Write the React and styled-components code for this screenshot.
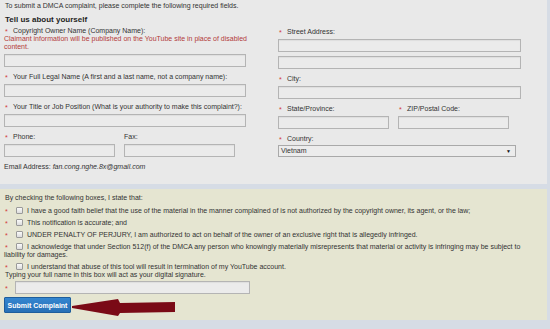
import React from 'react';
import styled, { createGlobalStyle } from 'styled-components';

const GlobalStyle = createGlobalStyle`
    body {
        margin: 0;
        background: #d6dce5;
        font-family: "Liberation Sans", Arial, sans-serif;
        font-size: 7px;
        color: #333;
    }
`;

const Page = styled.div`
    width: 550px;
    height: 329px;
    overflow: hidden;
`;

const TopPanel = styled.section`
    width: 547px;
    height: 184px;
    box-sizing: border-box;
    background: #e9e9e9;
    padding: 2px 0 0 4px;
`;

const Intro = styled.div`
    line-height: 8px;
    height: 8px;
    margin-left: 1px;
`;

const Title = styled.h3`
    margin: 5px 0 0 1px;
    font-size: 8px;
    line-height: 10px;
    font-weight: bold;
    color: #1e1e1e;
`;

const Columns = styled.div`
    display: grid;
    grid-template-columns: 274px 1fr;
    margin-top: 1px;
`;

const Column = styled.div`
    display: flex;
    flex-direction: column;
    padding-top: ${p => p.$offset || 0}px;
`;

const Field = styled.div`
    margin-top: ${p => p.$gap ?? 6}px;
`;

const Label = styled.div`
    line-height: 8px;
    white-space: nowrap;
`;

const Req = styled.span`
    display: inline-block;
    width: ${p => p.$w || 9}px;
    height: 8px;
    overflow: hidden;
    vertical-align: top;
    color: #d23a3a;
    font-size: 7px;
    line-height: 9px;
    padding-left: 1px;
    box-sizing: border-box;
`;

const Note = styled.div`
    color: #b33a3a;
    line-height: 8px;
    width: 250px;
`;

const Input = styled.div`
    width: ${p => p.$w}px;
    height: 13px;
    margin-top: ${p => p.$mt ?? 3}px;
    box-sizing: border-box;
    border: 1px solid #b4b4b4;
    background: #ebebeb;
    box-shadow: inset 0 1px 1px rgba(0, 0, 0, 0.06);
`;

const Pair = styled.div`
    display: flex;
    gap: ${p => p.$gap}px;
`;

const Select = styled.div`
    width: 238px;
    height: 12px;
    margin-top: 2px;
    box-sizing: border-box;
    border: 1px solid #a9a9a9;
    background: #ececec;
    display: flex;
    align-items: center;
    justify-content: space-between;
    padding: 0 4px 0 2px;
    line-height: 8px;
    color: #333;
`;

const Caret = styled.span`
    font-size: 5px;
    color: #111;
`;

const Email = styled.div`
    margin-top: 6px;
    line-height: 8px;
    em {
        font-style: italic;
    }
`;

const BottomPanel = styled.section`
    position: relative;
    width: 547px;
    height: 131px;
    margin-top: 5px;
    box-sizing: border-box;
    background: #e5e5d1;
    padding: 5px 8px 0 4px;
`;

const Statement = styled.div`
    line-height: 8px;
    margin-left: 1px;
`;

const Check = styled.div`
    line-height: 8px;
    margin-top: ${p => p.$mt ?? 4}px;
`;

const Box = styled.span`
    display: inline-block;
    width: 7px;
    height: 7px;
    box-sizing: border-box;
    border: 1px solid #9a9a9a;
    border-radius: 1px;
    background: linear-gradient(#fafafa, #dcdcdc);
    margin: 0 4px 0 3px;
    vertical-align: -1px;
`;

const SignRow = styled.div`
    display: flex;
    align-items: center;
    margin-top: 2px;
`;

const Button = styled.button`
    display: block;
    margin-top: 3px;
    width: 67px;
    height: 16px;
    padding: 0;
    border: 1px solid #1f5e9c;
    border-radius: 1px;
    background: linear-gradient(#3486d0, #2870b6);
    color: #fff;
    font-family: "Liberation Sans", Arial, sans-serif;
    font-size: 7px;
    font-weight: bold;
`;

const Arrow = styled.svg`
    position: absolute;
    left: 0;
    top: 0;
    pointer-events: none;
`;

export default function App() {
    return (
        <Page>
            <GlobalStyle />
            <TopPanel>
                <Intro>To submit a DMCA complaint, please complete the following required fields.</Intro>
                <Title>Tell us about yourself</Title>
                <Columns>
                    <Column>
                        <Field $gap={1}>
                            <Label><Req>*</Req>Copyright Owner Name (Company Name):</Label>
                            <Note>Claimant information will be published on the YouTube site in place of disabled content.</Note>
                            <Input $w={242} />
                        </Field>
                        <Field>
                            <Label><Req>*</Req>Your Full Legal Name (A first and a last name, not a company name):</Label>
                            <Input $w={242} />
                        </Field>
                        <Field>
                            <Label><Req>*</Req>Your Title or Job Position (What is your authority to make this complaint?):</Label>
                            <Input $w={242} />
                        </Field>
                        <Pair $gap={9}>
                            <Field>
                                <Label><Req>*</Req>Phone:</Label>
                                <Input $w={111} />
                            </Field>
                            <Field>
                                <Label>Fax:</Label>
                                <Input $w={111} />
                            </Field>
                        </Pair>
                        <Email>Email Address: <em>fan.cong.nghe.8x@gmail.com</em></Email>
                    </Column>
                    <Column $offset={1}>
                        <Field $gap={1}>
                            <Label><Req>*</Req>Street Address:</Label>
                            <Input $w={243} />
                            <Input $w={243} $mt={4} />
                        </Field>
                        <Field>
                            <Label><Req>*</Req>City:</Label>
                            <Input $w={243} />
                        </Field>
                        <Pair $gap={9}>
                            <Field>
                                <Label><Req>*</Req>State/Province:</Label>
                                <Input $w={111} />
                            </Field>
                            <Field>
                                <Label><Req>*</Req>ZIP/Postal Code:</Label>
                                <Input $w={111} />
                            </Field>
                        </Pair>
                        <Field>
                            <Label><Req>*</Req>Country:</Label>
                            <Select>Vietnam<Caret>▼</Caret></Select>
                        </Field>
                    </Column>
                </Columns>
            </TopPanel>
            <BottomPanel>
                <Statement>By checking the following boxes, I state that:</Statement>
                <Check $mt={5}><Req>*</Req><Box />I have a good faith belief that the use of the material in the manner complained of is not authorized by the copyright owner, its agent, or the law;</Check>
                <Check><Req>*</Req><Box />This notification is accurate; and</Check>
                <Check><Req>*</Req><Box />UNDER PENALTY OF PERJURY, I am authorized to act on behalf of the owner of an exclusive right that is allegedly infringed.</Check>
                <Check><Req>*</Req><Box />I acknowledge that under Section 512(f) of the DMCA any person who knowingly materially misrepresents that material or activity is infringing may be subject to liability for damages.</Check>
                <Check><Req>*</Req><Box />I understand that abuse of this tool will result in termination of my YouTube account.</Check>
                <Statement>Typing your full name in this box will act as your digital signature.</Statement>
                <SignRow>
                    <Req $w={11}>*</Req>
                    <Input $w={235} $mt={0} />
                </SignRow>
                <Button>Submit Complaint</Button>
                <Arrow width="547" height="131" viewBox="0 0 547 131">
                    <polygon
                        points="72,117 118,110 120,114 175,113 175,123 120,124 118,127 72,119"
                        fill="#7a0a16"
                    />
                </Arrow>
            </BottomPanel>
        </Page>
    );
}
